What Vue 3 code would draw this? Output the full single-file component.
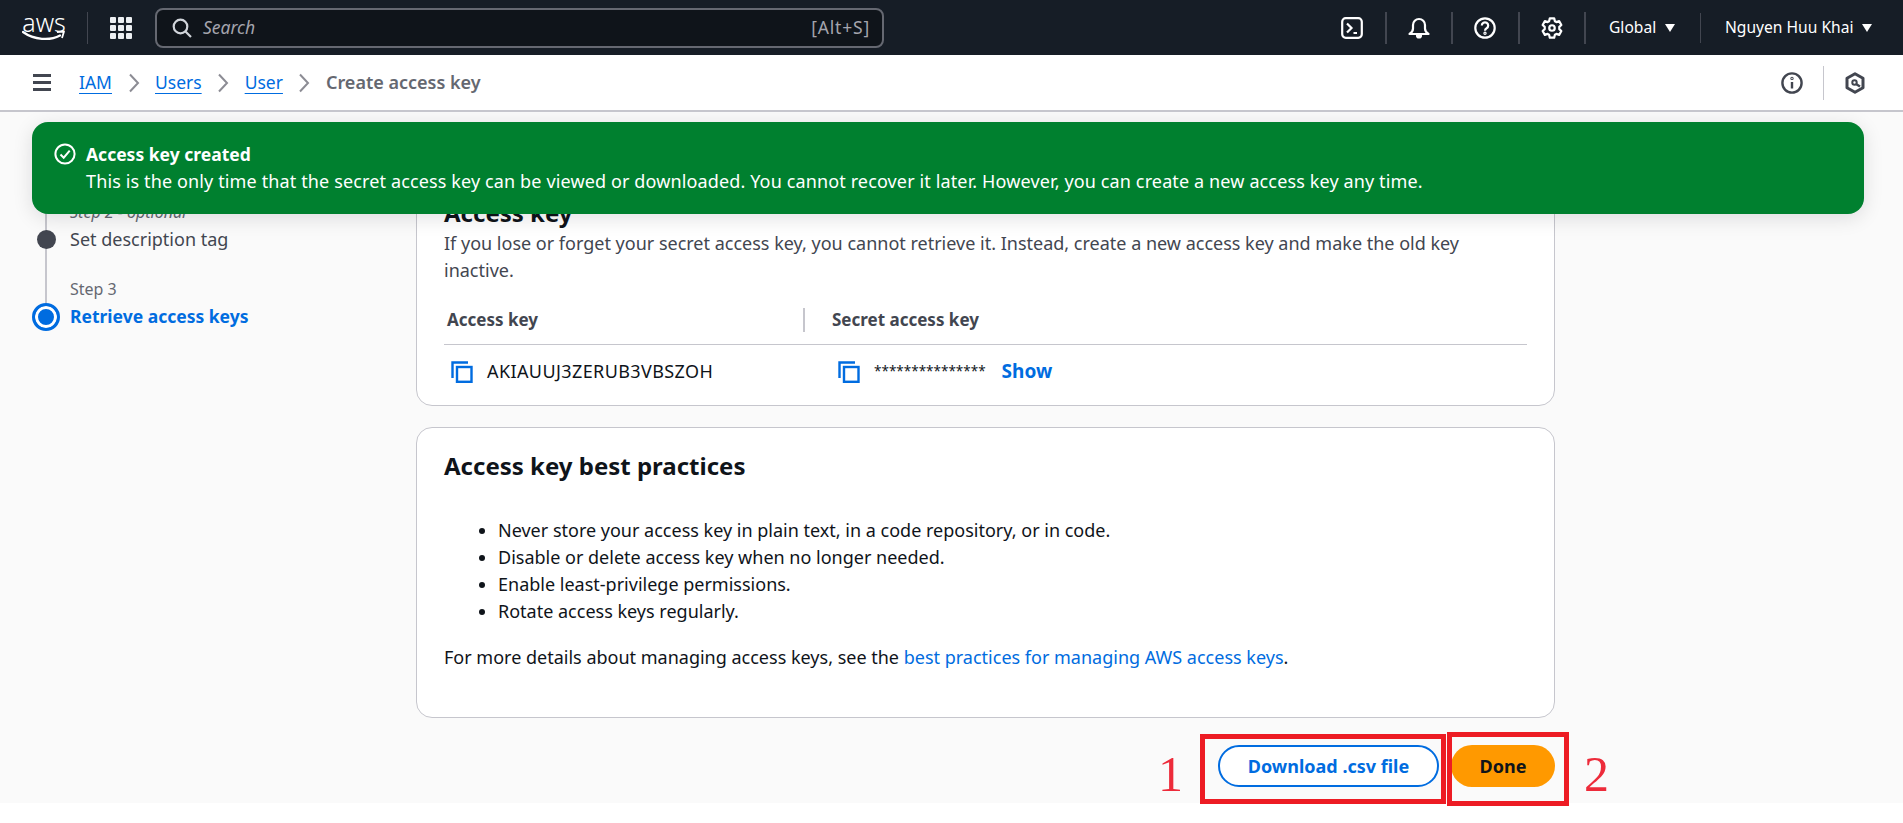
<template>
  <div class="page">
    <header class="topbar">
      <div class="logo">
        <span class="logo__text">aws</span>
        <svg class="logo__smile" viewBox="0 0 44 12" width="44" height="12">
          <path d="M1 2c11 8 27 9 37 3.500" fill="none" stroke="#fff" stroke-width="2.200" stroke-linecap="round" />
          <path d="M35 2l7-.5-2 6.500" fill="none" stroke="#fff" stroke-width="1.800" stroke-linejoin="round" />
        </svg>
      </div>
      <span class="topbar__rule"></span>
      <svg class="apps" viewBox="0 0 22 22" width="22" height="22" fill="#eceff2">
        <template v-for="y in [0, 8, 16]" :key="y">
          <rect v-for="x in [0, 8, 16]" :key="x" :x="x" :y="y" width="6" height="6" rx="1" />
        </template>
      </svg>
      <div class="search">
        <svg viewBox="0 0 20 20" width="20" height="20" fill="none" stroke="#d1d5db" stroke-width="2.200">
          <circle cx="8.500" cy="8.500" r="6.800" />
          <path d="M13.500 13.500l5.500 5.500" />
        </svg>
        <span class="search__hint">Search</span>
        <span class="search__key">[Alt+S]</span>
      </div>
      <div class="topbar__tools">
        <div class="tool">
          <svg viewBox="0 0 22 22" width="22" height="22" fill="none" stroke="#fff" stroke-width="2.200">
            <rect x="1.200" y="1.200" width="19.600" height="19.600" rx="3.500" />
            <path d="M6 6.500l4.500 4.500L6 15.500M12.500 16H16" />
          </svg>
        </div>
        <div class="tool">
          <svg viewBox="0 0 22 22" width="22" height="22" fill="none" stroke="#fff" stroke-width="2.200" stroke-linejoin="round">
            <path d="M1.500 17c2.500-1.500 3.500-3 3.500-5.500V8a6 6 0 0 1 12 0v3.500c0 2.500 1 4 3.500 5.500z" />
            <path d="M9 18.500a2 2 0 0 0 4 0z" fill="#fff" />
          </svg>
        </div>
        <div class="tool">
          <svg viewBox="0 0 22 22" width="22" height="22" fill="none" stroke="#fff" stroke-width="2.200">
            <circle cx="11" cy="11" r="9.700" />
            <path d="M7.800 8.500a3.200 3.200 0 1 1 4.800 2.800c-1 .6-1.600 1.200-1.600 2.400" />
            <circle cx="11" cy="16.300" r=".6" />
          </svg>
        </div>
        <div class="tool">
          <svg viewBox="0 0 16 16" width="22" height="22" fill="none" stroke="#fff" stroke-width="1.600" stroke-linejoin="round">
            <path d="M6.400 1h3.200l.5 2.100 1.100.6 2-.7 1.600 2.800-1.500 1.400v1.600l1.500 1.400-1.600 2.800-2-.7-1.100.6-.5 2.100H6.400l-.5-2.100-1.100-.6-2 .7-1.600-2.800 1.500-1.400V7.200L1.200 5.800 2.800 3l2 .7 1.100-.6z" />
            <circle cx="8" cy="8" r="2" />
          </svg>
        </div>
        <div class="menu menu--region">Global <span class="caret"></span></div>
        <div class="menu menu--user">Nguyen Huu Khai <span class="caret"></span></div>
      </div>
    </header>

    <nav class="crumbs">
      <span class="burger"><i></i><i></i><i></i></span>
      <template v-for="c in crumbs" :key="c">
        <a class="crumbs__link">{{ c }}</a>
        <svg viewBox="0 0 12 20" width="12" height="20" fill="none" stroke="#8c8c94" stroke-width="2">
          <path d="M2 1.500l8 8.500-8 8.500" />
        </svg>
      </template>
      <span class="crumbs__current">Create access key</span>
      <div class="crumbs__tools">
        <svg viewBox="0 0 22 22" width="22" height="22" fill="none" stroke="#424650" stroke-width="2.400">
          <circle cx="11" cy="11" r="9.600" />
          <path d="M11 10v6.500" />
          <circle cx="11" cy="6.400" r=".5" />
        </svg>
        <span class="crumbs__rule"></span>
        <svg viewBox="0 0 22 22" width="22" height="22" fill="none" stroke="#424650" stroke-width="3" stroke-linejoin="round">
          <path d="M11 1.800l8 4.500v9.400l-8 4.500-8-4.500V6.300z" />
          <circle cx="10.500" cy="10.500" r="2.200" stroke-width="2" />
          <path d="M12 12l4 2.500" stroke-width="2.400" />
        </svg>
      </div>
    </nav>

    <main class="main">
      <ol class="steps">
        <li class="step">
          <span class="step__label step__label--opt">Step 2 - optional</span>
          <span class="step__dot"></span>
          <span class="step__title">Set description tag</span>
        </li>
        <li class="step step--active">
          <span class="step__label">Step 3</span>
          <span class="step__ring"></span>
          <span class="step__title">Retrieve access keys</span>
        </li>
      </ol>

      <div class="content">
        <section class="card card--key">
          <h2 class="card__title">Access key</h2>
          <p class="card__text">If you lose or forget your secret access key, you cannot retrieve it. Instead, create a new access key and make the old key inactive.</p>
          <div class="keys">
            <div class="keys__head">Access key</div>
            <div class="keys__head keys__head--secret">Secret access key</div>
            <div class="keys__cell">
              <svg class="copy" viewBox="0 0 22 22" width="22" height="22" fill="none" stroke="#006ce0" stroke-width="2.400">
                <path d="M1.500 17V1.500H17" />
                <rect x="6" y="6" width="14.500" height="14.800" />
              </svg>
              <span class="key-id">AKIAUUJ3ZERUB3VBSZOH</span>
            </div>
            <div class="keys__cell keys__cell--secret">
              <svg class="copy" viewBox="0 0 22 22" width="22" height="22" fill="none" stroke="#006ce0" stroke-width="2.400">
                <path d="M1.500 17V1.500H17" />
                <rect x="6" y="6" width="14.500" height="14.800" />
              </svg>
              <span class="stars">***************</span>
              <a class="show">Show</a>
            </div>
          </div>
        </section>

        <section class="card card--tips">
          <h2 class="card__title">Access key best practices</h2>
          <ul class="tips">
            <li v-for="tip in tips" :key="tip">{{ tip }}</li>
          </ul>
          <p class="card__more">For more details about managing access keys, see the <a class="link">best practices for managing AWS access keys</a>.</p>
        </section>

        <div class="actions">
          <button class="btn btn--outline">Download .csv file</button>
          <button class="btn btn--primary">Done</button>
        </div>
      </div>

      <div class="flash">
        <svg class="flash__icon" viewBox="0 0 22 22" width="22" height="22" fill="none" stroke="#fff" stroke-width="2">
          <circle cx="11" cy="11" r="9.600" />
          <path d="M6.500 11.500l3.200 3.200 6-7" />
        </svg>
        <div class="flash__body">
          <div class="flash__title">Access key created</div>
          <div>This is the only time that the secret access key can be viewed or downloaded. You cannot recover it later. However, you can create a new access key any time.</div>
        </div>
      </div>
    </main>

    <span class="mark mark--one"></span>
    <span class="mark mark--two"></span>
    <span class="num num--one">1</span>
    <span class="num num--two">2</span>
  </div>
</template>

<script setup>
const crumbs = ['IAM', 'Users', 'User']

const tips = [
  'Never store your access key in plain text, in a code repository, or in code.',
  'Disable or delete access key when no longer needed.',
  'Enable least-privilege permissions.',
  'Rotate access keys regularly.'
]
</script>

<style>
body {
  background: #fff;
}
</style>

<style scoped>
.page {
  position: relative;
  height: 823px;
  overflow: hidden;
  font-family: "Noto Sans", Arial, sans-serif;
  font-size: 18px;
  line-height: 27px;
  color: #424650;
}

/* top bar */
.topbar {
  display: flex;
  align-items: center;
  height: 55px;
  background: #161d26;
  color: #fff;
  padding-left: 23px;
}
.logo {
  width: 42px;
  height: 28px;
  display: flex;
  flex-direction: column;
  align-items: center;
}
.logo__text {
  font-size: 25px;
  line-height: 17px;
  font-weight: 300;
}
.logo__smile {
  flex: none;
  margin-top: -1px;
}
.topbar__rule {
  width: 1px;
  height: 32px;
  background: #424650;
  margin: 0 22px;
}
.search {
  flex: none;
  width: 729px;
  height: 40px;
  box-sizing: border-box;
  margin-left: 23px;
  display: flex;
  align-items: center;
  gap: 11px;
  padding: 0 12px 0 15px;
  background: #0f141a;
  border: 2px solid #656871;
  border-radius: 8px;
  font-size: 17.500px;
  color: #a4a4ad;
}
.search__hint {
  font-style: italic;
}
.search__key {
  margin-left: auto;
  letter-spacing: .8px;
}
.topbar__tools {
  display: flex;
  align-items: center;
  margin-left: auto;
}
.tool {
  width: 66.500px;
  height: 32px;
  box-sizing: border-box;
  display: flex;
  align-items: center;
  justify-content: center;
  border-right: 2px solid #424650;
}
.menu {
  display: flex;
  align-items: center;
  gap: 9px;
  font-size: 15.600px;
  height: 30px;
}
.menu--region {
  width: 115px;
  box-sizing: border-box;
  padding-left: 23px;
  border-right: 1px solid #424650;
}
.menu--user {
  width: 202px;
  box-sizing: border-box;
  padding-left: 24px;
}
.caret {
  width: 0;
  height: 0;
  border-left: 5.500px solid transparent;
  border-right: 5.500px solid transparent;
  border-top: 8px solid #fff;
}

/* breadcrumb bar */
.crumbs {
  display: flex;
  align-items: center;
  gap: 15.500px;
  height: 57px;
  box-sizing: border-box;
  padding: 0 37px 0 33px;
  background: #fff;
  border-bottom: 2px solid #c6c6cd;
  font-size: 17.500px;
}
.burger {
  width: 18px;
  margin-right: 12.500px;
  display: flex;
  flex-direction: column;
  gap: 4px;
}
.burger i {
  display: block;
  height: 3px;
  background: #424650;
}
.crumbs__link {
  color: #006ce0;
  text-decoration: underline;
  text-underline-offset: 4px;
}
.crumbs__current {
  font-weight: 600;
  font-size: 18px;
  color: #656871;
}
.crumbs__tools {
  margin-left: auto;
  display: flex;
  align-items: center;
  gap: 20px;
}
.crumbs__rule {
  width: 1px;
  height: 34px;
  background: #c6c6cd;
}

/* main area */
.main {
  position: relative;
  display: grid;
  grid-template-columns: 384px 1139px;
  height: 691px;
  box-sizing: border-box;
  padding-left: 32px;
  background: #fafafa;
  overflow: hidden;
}
.steps {
  list-style: none;
  margin: 0;
  padding: 87px 0 0;
}
.step {
  display: grid;
  grid-template-columns: 28px 1fr;
  column-gap: 10px;
  padding-bottom: 23px;
  background: linear-gradient(#c6c6cd, #c6c6cd) 13px 0 / 2px 100% no-repeat;
}
.step--active {
  background-size: 2px 27px;
}
.step__label {
  grid-column: 2;
  color: #656871;
  font-size: 16px;
}
.step__label--opt {
  font-style: italic;
}
.step__dot {
  justify-self: center;
  align-self: center;
  width: 19px;
  height: 19px;
  border-radius: 50%;
  background: #424650;
}
.step__ring {
  box-sizing: border-box;
  width: 28px;
  height: 28px;
  border-radius: 50%;
  border: 3px solid #006ce0;
  background: #006ce0;
  box-shadow: inset 0 0 0 3px #fff;
}
.step__title {
  color: #424650;
}
.step--active .step__title {
  color: #006ce0;
  font-weight: 700;
  font-size: 17.500px;
}

.content {
  padding-top: 75px;
}
.card {
  box-sizing: border-box;
  padding: 0 27px;
  background: #fff;
  border: 1px solid #c6c6cd;
  border-radius: 16px;
}
.card--key {
  height: 219px;
  padding-top: 10px;
}
.card--tips {
  height: 291px;
  margin-top: 21px;
  padding-top: 23px;
}
.card__title {
  margin: 0;
  font-size: 24px;
  line-height: 30px;
  font-weight: 700;
  color: #0f141a;
}
.card__text {
  margin: 2px 0 0;
}
.keys {
  display: grid;
  grid-template-columns: 359px 1fr;
  margin-top: 22px;
}
.keys__head {
  font-weight: 700;
  font-size: 17px;
  padding-left: 3px;
  height: 39px;
  box-sizing: border-box;
  border-bottom: 1px solid #c6c6cd;
}
.keys__head--secret {
  position: relative;
  padding-left: 29px;
}
.keys__head--secret::before {
  content: "";
  position: absolute;
  left: 0;
  top: 2px;
  width: 2px;
  height: 24px;
  background: #c6c6cd;
}
.keys__cell {
  display: flex;
  align-items: center;
  gap: 14px;
  padding: 13px 0 0 7px;
  color: #0f141a;
}
.keys__cell--secret {
  padding-left: 35px;
}
.copy {
  flex: none;
}
.key-id {
  letter-spacing: .4px;
}
.stars {
  font-size: 13.500px;
}
.show {
  color: #006ce0;
  font-weight: 700;
  font-size: 19px;
  margin-left: 2px;
}
.tips {
  margin: 36px 0 0;
  padding-left: 54px;
  color: #0f141a;
}
.card__more {
  margin: 19px 0 0;
  color: #0f141a;
}
.link {
  color: #006ce0;
}
.actions {
  display: flex;
  justify-content: flex-end;
  gap: 12px;
  margin-top: 27px;
}
.btn {
  height: 42px;
  box-sizing: border-box;
  border-radius: 21px;
  font: inherit;
  font-weight: 700;
}
.btn--outline {
  width: 221px;
  background: #fff;
  color: #006ce0;
  border: 2px solid #006ce0;
}
.btn--primary {
  width: 104px;
  background: #ff9900;
  color: #0f141a;
  border: none;
}

/* success flash over the page */
.flash {
  position: absolute;
  left: 32px;
  top: 10px;
  width: 1832px;
  height: 92px;
  box-sizing: border-box;
  display: flex;
  align-items: flex-start;
  gap: 10px;
  padding: 19px 22px;
  background: #00802f;
  border-radius: 16px;
  color: #fff;
  box-shadow: 0 4px 20px rgba(0, 7, 22, 0.12);
}
.flash__icon {
  flex: none;
  margin-top: 2px;
}
.flash__body {
  letter-spacing: .13px;
}
.flash__title {
  font-weight: 700;
  font-size: 17.500px;
  letter-spacing: 0;
}

/* red annotations */
.mark {
  position: absolute;
  box-sizing: border-box;
  border: 5px solid #ed1c24;
}
.mark--one {
  left: 1200px;
  top: 734px;
  width: 246px;
  height: 70px;
}
.mark--two {
  left: 1447px;
  top: 732px;
  width: 122px;
  height: 74px;
}
.num {
  position: absolute;
  font-family: "Liberation Serif", serif;
  font-size: 50px;
  line-height: 50px;
  color: #ed2b3a;
}
.num--one {
  left: 1158px;
  top: 749px;
}
.num--two {
  left: 1584px;
  top: 749px;
}
</style>
